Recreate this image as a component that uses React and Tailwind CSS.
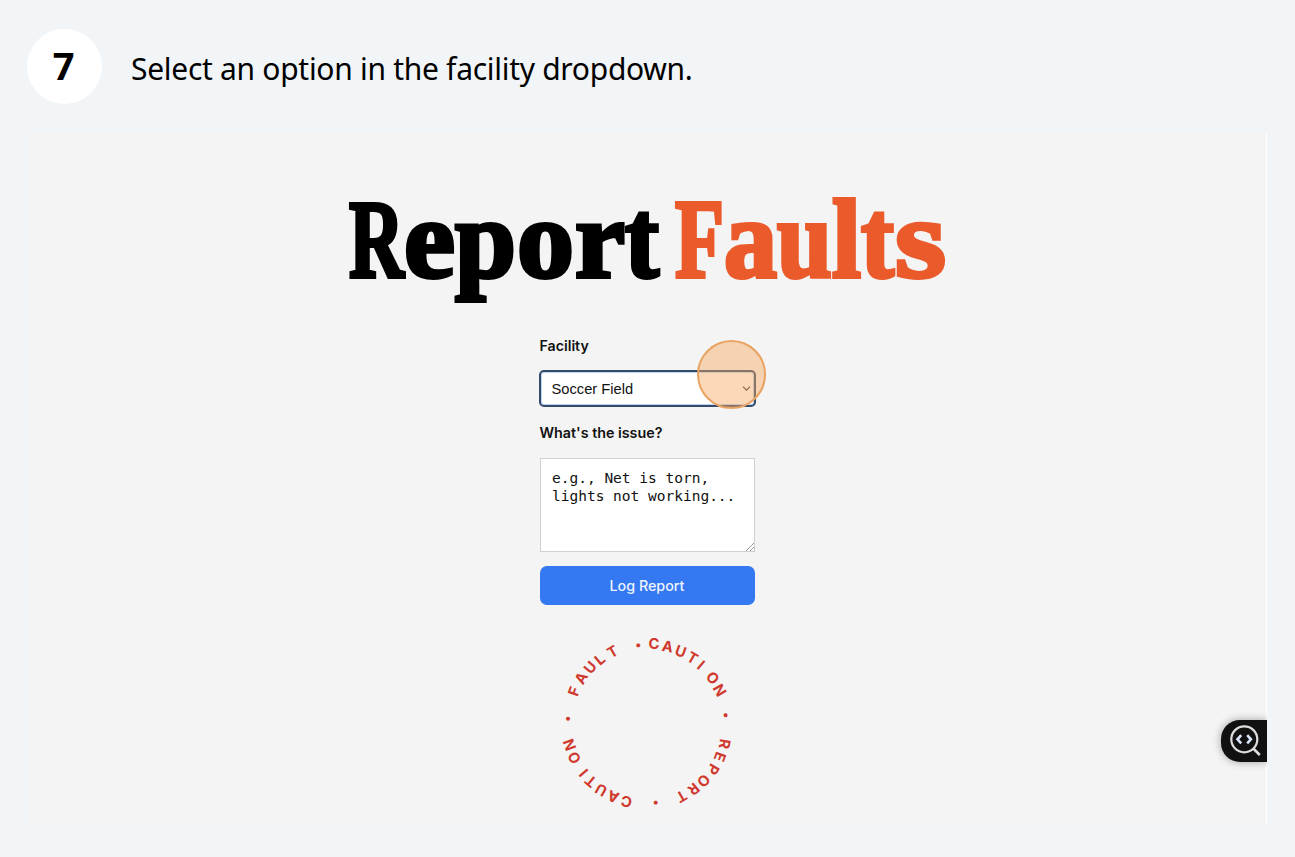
import React from "react";

const RING = "CAUTION • REPORT • CAUTION • FAULT •";

// Each entry: glyph, left edge, advance width.
const REPORT = [
  ["R", 12, 55],
  ["e", 67, 51],
  ["p", 118, 61],
  ["o", 180, 57],
  ["r", 238, 50],
  ["t", 288, 34],
];
const FAULTS = [
  ["F", 338, 49],
  ["a", 387, 53],
  ["u", 440, 55],
  ["l", 495, 29],
  ["t", 524, 33],
  ["s", 558, 51],
];

function Word({ glyphs, color }) {
  return (
    <text y="84" fill={color} stroke={color}>
      {glyphs.map(([char, x, width]) => (
        <tspan key={char} x={x} textLength={width} lengthAdjust="spacingAndGlyphs">
          {char}
        </tspan>
      ))}
    </text>
  );
}

function StepHeader() {
  return (
    <header className="flex h-[75px] items-center">
      <div className="flex size-[75px] items-center justify-center rounded-full bg-white">
        <span className="-mt-1 -ml-0.5 text-[38px] leading-none font-bold">7</span>
      </div>
      <h1 className="mt-[4px] ml-[29px] text-[30px] leading-none tracking-[-0.29px] whitespace-nowrap">
        Select an option in the facility dropdown.
      </h1>
    </header>
  );
}

function Title() {
  return (
    <svg
      className="h-[116px] w-[620px] shrink-0 overflow-visible"
      viewBox="0 0 620 116"
      fontFamily="'Liberation Serif', serif"
      fontSize="113"
      fontWeight="700"
      strokeWidth="4"
      strokeLinejoin="miter"
      strokeMiterlimit="2"
    >
      <Word glyphs={REPORT} color="#000" />
      <Word glyphs={FAULTS} color="#eb5a2a" />
    </svg>
  );
}

function CautionRing() {
  return (
    <svg
      className="mt-[20px] size-[198px] shrink-0"
      viewBox="-99 -99 198 198"
      fontFamily="Inter, sans-serif"
      fontWeight="700"
      fill="#d0392e"
    >
      {RING.split("").map((char, i) =>
        char === " " ? null : (
          <text
            key={i}
            x={char === "•" ? 2.2 : 1.4}
            y={char === "•" ? -75.2 : -74.6}
            fontSize={char === "•" ? 12.5 : 14.8}
            transform={`rotate(${i * 10})`}
          >
            {char}
          </text>
        )
      )}
    </svg>
  );
}

function InspectButton() {
  return (
    <div className="absolute top-[587px] right-0 flex h-[42px] w-[46px] items-center rounded-l-[19px] bg-[#111] pl-[8px] shadow-[0_0_8px_rgba(0,0,0,0.35)]">
      <svg className="size-[34px] shrink-0" viewBox="0 0 34 34" fill="none">
        <circle cx="15.3" cy="15.3" r="13" stroke="#dedede" strokeWidth="2.2" />
        <path d="M24.3 24.5 30.8 31" stroke="#dedede" strokeWidth="2.6" />
        <path
          d="m12.2 11.2-3.7 4.1 3.7 4.1M18.2 11.2l3.7 4.1-3.7 4.1"
          stroke="#dce6fa"
          strokeWidth="2.6"
        />
      </svg>
    </div>
  );
}

export default function App() {
  return (
    <div className="h-[857px] w-[1295px] overflow-hidden bg-[#f1f5f8] pt-[29px] pl-[27px] font-['Noto_Sans',sans-serif] text-black">
      <StepHeader />
      <main className="relative mt-[29px] flex h-[691px] w-[1240px] flex-col items-center overflow-hidden bg-[#f4f4f4] pt-[60px] shadow-[inset_-1px_0_0_white]">
        <Title />
        <form className="mt-[27px] flex w-[215px] flex-col font-['Inter',sans-serif] text-[#111]">
          <label className="h-[20px] text-[14.2px] leading-[20px] font-semibold">Facility</label>
          <div className="relative mt-[14px] flex h-[37px] w-[217px] -translate-x-px items-center justify-between rounded-[5px] border-2 border-[#334a6b] bg-white pr-[3px] pl-[11px] font-['Liberation_Sans',sans-serif] text-[14.7px] shadow-[inset_0_0_0_1px_#bcd5f3]">
            <span className="mt-px">Soccer Field</span>
            <svg className="size-[9px]" viewBox="0 0 9 9" fill="none" stroke="#333" strokeWidth="1.2">
              <path d="m1 2.7 3.5 3.5L8 2.7" />
            </svg>
            <div className="absolute -top-[32px] -right-[12px] size-[69px] rounded-full border-[2.5px] border-[#e9a363] bg-[#f5a962]/45" />
          </div>
          <label className="mt-[15.5px] h-[20px] text-[14.3px] leading-[20px] font-semibold">
            What's the issue?
          </label>
          <div className="relative mt-[15px] h-[94px] border border-[#d0d0d0] bg-white pt-[11.5px] pl-[11.5px] font-['DejaVu_Sans_Mono',monospace] text-[14.5px] leading-[17.5px] whitespace-nowrap">
            <p>e.g., Net is torn,</p>
            <p>lights not working...</p>
            <svg className="absolute right-0 bottom-0 size-[9px]" viewBox="0 0 9 9" stroke="#999" strokeWidth="1">
              <path d="M1 9 9 1M5 9l4-4" />
            </svg>
          </div>
          <button
            type="button"
            className="mt-[14.5px] h-[39px] rounded-[7px] bg-[#3478f2] text-[14.3px] font-medium text-[#eef4ff]"
          >
            Log Report
          </button>
        </form>
        <CautionRing />
        <InspectButton />
      </main>
    </div>
  );
}
